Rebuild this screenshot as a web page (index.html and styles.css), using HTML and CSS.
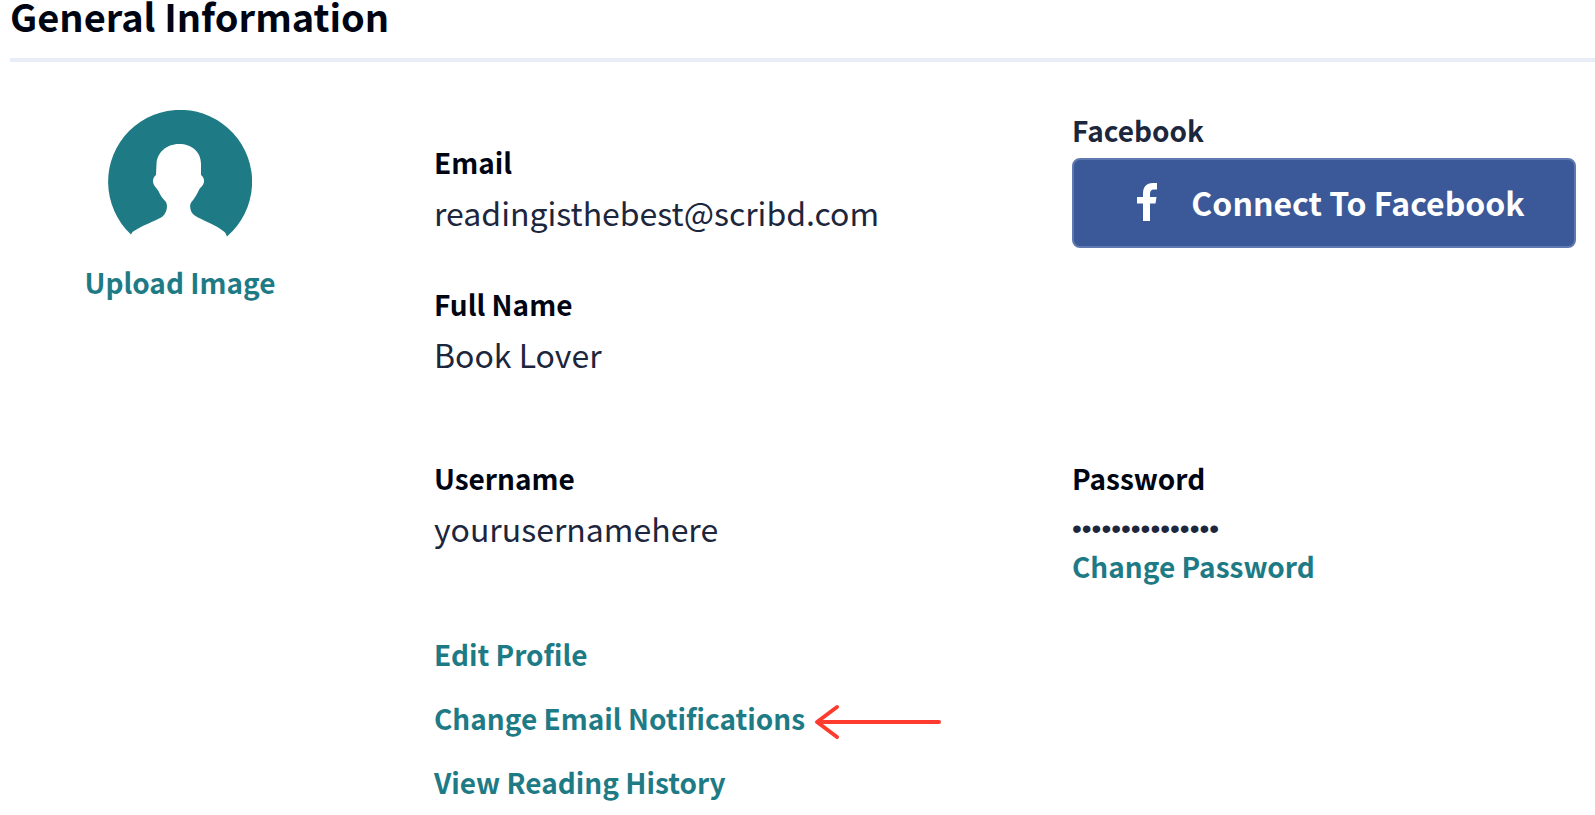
FILE: index.html
```html
<!DOCTYPE html>
<html lang="en">
<head>
    <meta charset="UTF-8">
    <meta name="viewport" content="width=device-width, initial-scale=1.0">
    <title>General Information</title>
    <link rel="stylesheet" href="styles.css">
</head>
<body>
    <section class="account">
        <h2 class="account-title">General Information</h2>
        <div class="account-grid">
            <div class="avatar">
                <svg class="avatar-img" viewBox="0 0 144 144" aria-hidden="true">
                    <path fill="#1e7b85" d="M23 124.500A72 72 0 1 1 119 126.500C118 125 118 123 116.500 122C107 114 95 111 86 105C82 102 81 95 83.500 92C87 88 89 84 91 80C92 77 96 76 96 71C96 68 95 67 93 65V54C93 42 84 34 71 34C58 34 49 43 48.500 54L48 65C46 67 45 68 45 71C45 76 49 78 50.500 81C52 85 55 89 58 92C60 96 59 103 54 107C45 112 35 115 26 121C24 122 24 123 23 124.500Z"/>
                </svg>
                <a href="#" class="link">Upload Image</a>
            </div>
            <dl class="fields">
                <dt>Email</dt>
                <dd>readingisthebest@scribd.com</dd>
                <dt>Full Name</dt>
                <dd>Book Lover</dd>
            </dl>
            <div class="facebook">
                <h3 class="facebook-title">Facebook</h3>
                <button type="button" class="facebook-btn">
                    <svg class="facebook-icon" viewBox="0 0 20 38" aria-hidden="true">
                        <path fill="#fff" d="M6 38V20.500H0V14H6V11C6 4 9 0 16 0H20V6.500H17C14 6.500 13 8 13 11V14H19.500L18.500 20.500H13V38Z"/>
                    </svg>
                    <span>Connect To Facebook</span>
                </button>
            </div>
            <dl class="fields username">
                <dt>Username</dt>
                <dd>yourusernamehere</dd>
            </dl>
            <div class="password">
                <dl class="fields">
                    <dt>Password</dt>
                    <dd class="dots">•••••••••••••••</dd>
                </dl>
                <a href="#" class="link">Change Password</a>
            </div>
            <ul class="links">
                <li><a href="#" class="link">Edit Profile</a></li>
                <li>
                    <a href="#" class="link">Change Email Notifications</a>
                    <svg class="arrow" viewBox="0 0 126 40" aria-hidden="true">
                        <path fill="none" stroke="#ff3b30" stroke-width="4" stroke-linecap="round" stroke-linejoin="round" d="M124 24H3M22 9L2 24L22 39"/>
                    </svg>
                </li>
                <li><a href="#" class="link">View Reading History</a></li>
            </ul>
        </div>
    </section>
</body>
</html>
```

FILE: styles.css
```css
*{margin:0;padding:0;box-sizing:border-box;}

body{
    font-family:"Noto Sans CJK SC", "Noto Sans", sans-serif;
    font-size:28px;
    line-height:40px;
    color:#1c263d;
    background:#fff;
}
ul{list-style:none;}

.account{padding-left:10px;}
.account-title{
    padding-bottom:26px;
    border-bottom:4px solid #e9edf8;
    font-size:38px;
    font-weight:700;
    line-height:32px;
    color:#000514;
}
.account-grid{
    display:grid;
    grid-template-columns:424fr 638fr 504fr;
    padding:48px 19px 0 0;
}
.link{
    font-weight:700;
    color:#1e7b85;
    text-decoration:none;
}

/* avatar */
.avatar{
    display:flex;
    flex-direction:column;
    align-items:center;
    padding-right:84px;
}
.avatar-img{
    width:144px;
    height:144px;
    margin-bottom:8px;
}

/* label + value */
.fields dt{
    margin-bottom:6px;
    font-weight:700;
    color:#000514;
}
.fields dd{
    font-size:32px;
    line-height:48px;
}
.avatar + .fields{padding-top:32px;}
.fields dd + dt{margin-top:48px;}

/* facebook */
.facebook-title{
    margin-bottom:8px;
    font-size:28px;
    font-weight:700;
}
.facebook-btn{
    display:flex;
    align-items:center;
    justify-content:center;
    gap:34px;
    width:100%;
    height:90px;
    padding:0 0 2px 14px;
    border:2px solid #6079b0;
    border-radius:8px;
    background:#3b5998;
    color:#fff;
    font-family:inherit;
    font-size:32px;
    font-weight:700;
    line-height:48px;
    cursor:pointer;
}
.facebook-icon{
    width:20px;
    height:38px;
}

/* second row */
.username, .password{margin-top:80px;}
.username{grid-column:2;}
.fields .dots{
    padding-top:8px;
    font-family:"Liberation Sans", sans-serif;
    font-size:28px;
    line-height:34px;
}
.password .link{display:block;}

/* links */
.links{
    grid-column:2;
    display:flex;
    flex-direction:column;
    gap:24px;
    padding-top:48px;
}
.links li{
    display:flex;
    align-items:center;
    gap:10px;
}
.arrow{
    width:126px;
    height:40px;
    overflow:visible;
}
```
